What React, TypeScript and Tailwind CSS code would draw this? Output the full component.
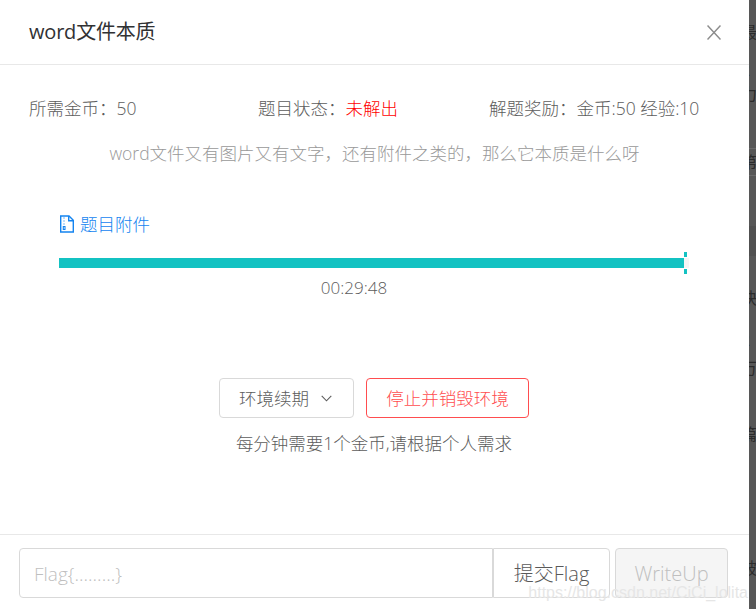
const font = { fontFamily: '"Open Sans", "Noto Sans CJK SC", sans-serif' };

// bits of the page behind the mask, cut off by the window edge
const behind = [
  { top: 'top-[22px]', text: '最' },
  { top: 'top-[60px]', text: '2' },
  { top: 'top-[84px]', text: '力' },
  { top: 'top-[152px]', text: '第' },
  { top: 'top-[288px]', text: '块' },
  { top: 'top-[330px]', text: '2' },
  { top: 'top-[358px]', text: '万' },
  { top: 'top-[424px]', text: '篇' },
  { top: 'top-[558px]', text: '破' },
];

export default function App() {
  return (
    <div className="relative flex h-[609px] w-[756px] overflow-hidden bg-[#575757] font-['Open_Sans','Noto_Sans_CJK_SC',sans-serif]">
      <main className="flex h-full w-[749px] shrink-0 flex-col bg-white">
        <header className="flex h-[65px] shrink-0 items-center justify-between border-b border-[#e8e8e8] pl-[29px] pr-[28px]">
          <h1 className="text-[20px] font-normal tracking-[-0.2px] text-[#303133]">word文件本质</h1>
          <svg width="14" height="15" viewBox="0 0 14 15" className="text-[#8c8c8c]">
            <path d="M0.5 0.5 L13.5 14.5 M13.5 0.5 L0.5 14.5" stroke="currentColor" strokeWidth="1.5" fill="none" />
          </svg>
        </header>

        <section className="flex flex-1 flex-col">
          <div className="grid grid-cols-[229px_231px_1fr] pl-[29px] pt-[30px] text-[17.5px] font-light leading-[26px] text-[#5c5c5c]">
            <span>所需金币：50</span>
            <span>
              题目状态：<span className="text-[#ff0000]">未解出</span>
            </span>
            <span>解题奖励：金币:50 经验:10</span>
          </div>

          <p className="mt-[19px] text-center text-[17.5px] font-light leading-[26px] text-[#999999]">
            word文件又有图片又有文字，还有附件之类的，那么它本质是什么呀
          </p>

          <div className="mt-[45px] pl-[59px]">
            <a className="flex items-center gap-[5px] text-[17.5px] font-light leading-[26px] text-[#1484f0]">
              <svg width="16" height="18" viewBox="0 0 16 18" fill="none" stroke="currentColor" strokeWidth="1.4">
                <path d="M1.7 1 H10 L14.3 5.3 V17 H1.7 Z" />
                <path d="M9.7 1 V5.8 H14.3" />
                <path d="M5 2.5 V3.5 M5 5.5 V6.5 M5 8.5 V9.5 M4.3 11.5 H6 V14.5 H4.3 Z" strokeWidth="1.1" />
              </svg>
              题目附件
            </a>

            <div className="mt-[21px] flex h-[10px] w-[630px] items-center">
              <div className="h-[10px] w-[625px] bg-[#13c2c2]" />
              <div className="relative h-[10px] w-[5px] bg-[#f5f5f5]">
                <span className="absolute left-0 top-[-6px] h-[5px] w-[3px] bg-[#13c2c2]" />
                <span className="absolute left-0 top-[11px] h-[5px] w-[3px] bg-[#13c2c2]" />
              </div>
            </div>

            <p className="mt-[8px] w-[590px] text-center text-[17px] font-light leading-[24px] text-[#5c5c5c]">
              00:29:48
            </p>
          </div>

          <div className="mt-[78px] flex justify-center gap-[12px] pr-[1px]">
            <button className="flex h-[40px] w-[135px] items-center justify-center gap-[12px] rounded-[4px] border border-[#d9d9d9] pr-[2px] text-[17.5px] font-light text-[#5c5c5c]">
              环境续期
              <svg width="11" height="7" viewBox="0 0 11 7" fill="none" stroke="currentColor" strokeWidth="1.1">
                <path d="M0.7 0.8 L5.5 5.8 L10.3 0.8" />
              </svg>
            </button>
            <button className="h-[40px] w-[163px] rounded-[4px] border border-[#ff4d4f] text-[17.5px] font-light text-[#ff4d4f]">
              停止并销毁环境
            </button>
          </div>

          <p className="mt-[12px] pr-[1px] text-center text-[17.5px] font-light leading-[26px] text-[#5c5c5c]">
            每分钟需要1个金币,请根据个人需求
          </p>
        </section>

        <footer className="flex h-[75px] shrink-0 gap-[5px] border-t border-[#e8e8e8] pl-[19px] pt-[13px]">
          <div className="flex h-[50px] w-[591px]">
            <input
              placeholder="Flag{.........}"
              style={font}
              className="h-full w-[474px] rounded-l-[4px] border border-[#d9d9d9] px-[14px] pt-[1px] text-[19px] font-light outline-none placeholder:text-[#bfbfbf]"
            />
            <button className="h-full flex-1 rounded-r-[4px] border border-[#d9d9d9] pt-[2px] text-[20px] font-light text-[#595959]">
              提交Flag
            </button>
          </div>
          <button className="h-[50px] w-[113px] rounded-[4px] border border-[#d9d9d9] bg-[#f5f5f5] pt-[2px] text-[20px] font-light text-[#bfbfbf]">
            WriteUp
          </button>
        </footer>
      </main>

      <aside className="relative h-full flex-1 overflow-hidden text-[16px] text-[#2b2b2b]">
        <div className="absolute left-0 top-[148px] h-[28px] w-full border-y border-[#6a6a6a]" />
        <div className="absolute left-0 top-[226px] h-[30px] w-full bg-[#505050]" />
        {behind.map((b, i) => (
          <span key={i} className={`absolute left-[-8px] leading-[20px] ${b.top}`}>
            {b.text}
          </span>
        ))}
      </aside>

      {/* csdn watermark */}
      <span className="absolute bottom-[6px] right-[8px] text-[16px] font-['Liberation_Sans',sans-serif] leading-[20px] text-[#e6e6e6]">
        https://blog.csdn.net/CiCi_lolita
      </span>
    </div>
  );
}
